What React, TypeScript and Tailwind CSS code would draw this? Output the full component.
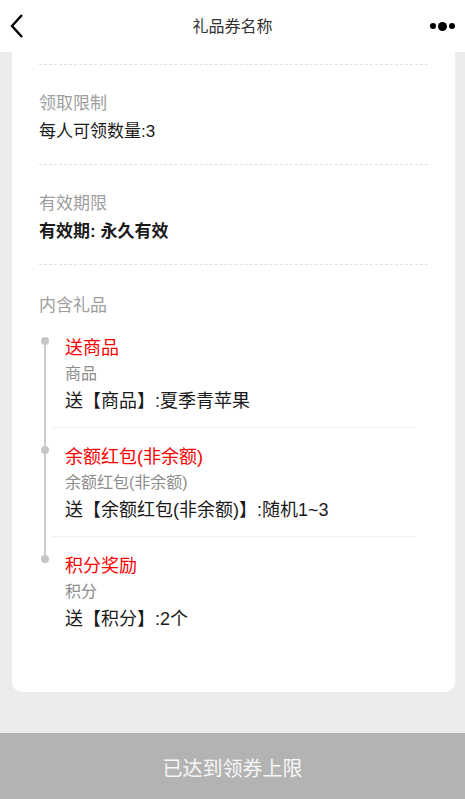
import type { ReactNode } from 'react';

type Gift = {
  title: string;
  kind: string;
  detail: string;
};

const gifts: Gift[] = [
  { title: '送商品', kind: '商品', detail: '送【商品】:夏季青苹果' },
  { title: '余额红包(非余额)', kind: '余额红包(非余额)', detail: '送【余额红包(非余额)】:随机1~3' },
  { title: '积分奖励', kind: '积分', detail: '送【积分】:2个' },
];

const font = { fontFamily: '"Liberation Sans", "Noto Sans CJK SC", sans-serif' };

const Header = () => (
  <header className="grid h-[52px] shrink-0 grid-cols-[70px_1fr_70px] items-center bg-white">
    <svg width="34" height="52" viewBox="0 0 34 52">
      <polyline points="22,15 12,26 22,37" fill="none" stroke="#000" strokeWidth="2.4" />
    </svg>
    <h1 className="pt-[2px] text-center text-[16px] leading-[50px] text-[#333]">礼品券名称</h1>
    <div className="flex items-center justify-end gap-[2px] pr-[10px]">
      <span className="h-[6px] w-[6px] rounded-full bg-black" />
      <span className="h-[9px] w-[9px] rounded-full bg-black" />
      <span className="h-[6px] w-[6px] rounded-full bg-black" />
    </div>
  </header>
);

const Section = ({ label, children, last }: { label: string; children: ReactNode; last?: boolean }) => (
  <section className={last ? 'pt-[29px]' : 'border-b border-dashed border-[#e2e2e2] pt-[27px] pb-[18px]'}>
    <div className="text-[17px] leading-[24px] text-[#9e9e9e]">{label}</div>
    {children}
  </section>
);

const GiftItem = ({ gift, first, last }: { gift: Gift; first: boolean; last: boolean }) => (
  <div className="flex">
    {/* timeline rail */}
    <div className="flex w-[12px] shrink-0 flex-col items-center">
      <div className={`h-[18px] w-[2px] ${first ? '' : 'bg-[#cccccc]'}`} />
      <div className="h-[8px] w-[8px] rounded-full bg-[#c6c6c6]" />
      <div className={`w-[2px] flex-1 ${last ? '' : 'bg-[#cccccc]'}`} />
    </div>
    <div
      className={`ml-[1px] flex-1 pl-[13px] pt-[17px] ${
        last ? 'pb-[60px]' : 'border-b border-[#f0f0f0] pb-[13px]'
      }`}
    >
      <div className="text-[18px] leading-[24px] text-[#ff0000]">{gift.title}</div>
      <div className="mt-[3px] text-[16px] leading-[22px] text-[#8c8c8c]">{gift.kind}</div>
      <div className="mt-[3px] text-[18px] leading-[26px] text-[#1a1a1a]">{gift.detail}</div>
    </div>
  </div>
);

const App = () => {
  return (
    <div className="flex h-[799px] w-[465px] flex-col bg-[#ececec]" style={font}>
      <Header />
      <main className="flex-1 overflow-hidden">
        <div className="ml-[12px] w-[443px] rounded-b-[10px] bg-white px-[27px]">
          <div className="h-[13px] border-b border-dashed border-[#e2e2e2]" />
          <Section label="领取限制">
            <div className="mt-[2px] text-[17px] leading-[28px] text-[#1a1a1a]">每人可领数量:3</div>
          </Section>
          <Section label="有效期限">
            <div className="mt-[2px] text-[17px] font-bold leading-[28px] text-[#1a1a1a]">有效期: 永久有效</div>
          </Section>
          <Section label="内含礼品" last>
            <div className="mt-[1px] mr-[12px]">
              {gifts.map((gift, i) => (
                <GiftItem key={gift.title} gift={gift} first={i === 0} last={i === gifts.length - 1} />
              ))}
            </div>
          </Section>
        </div>
      </main>
      <footer className="h-[66px] shrink-0 bg-[#b3b3b3] pt-[6px] text-center text-[20px] leading-[60px] text-[#f7f7f7]">
        已达到领券上限
      </footer>
    </div>
  );
};

export default App;
